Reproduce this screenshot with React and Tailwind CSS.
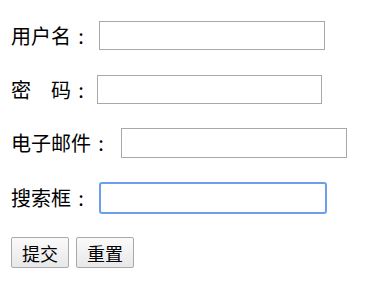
export default function App() {
  const font = { fontFamily: '"Noto Sans CJK SC", "Noto Sans", sans-serif' };
  return (
    <div className="bg-white w-[370px] h-[294px] pl-[11px] pt-[21px] text-[20px] text-black" style={font}>
      <div className="flex items-center h-[29px]">
        <label className="w-[80px] flex leading-none">
          <span>用户名</span>
          <span className="w-[20px] text-center">:</span>
        </label>
        <input type="text" className="ml-[8px] w-[226px] h-[29px] border border-[#a9a9a9] bg-white outline-none" />
      </div>

      <div className="flex items-center h-[29px] mt-[25px]">
        <label className="w-[80px] flex leading-none">
          <span>密</span>
          <span className="w-[20px]"></span>
          <span>码</span>
          <span className="w-[20px] text-center">:</span>
        </label>
        <input type="password" className="ml-[6px] w-[225px] h-[29px] border border-[#a9a9a9] bg-white outline-none" />
      </div>

      <div className="flex items-center h-[30px] mt-[24px]">
        <label className="w-[100px] flex leading-none">
          <span>电子邮件</span>
          <span className="w-[20px] text-center">:</span>
        </label>
        <input type="email" className="ml-[10px] w-[226px] h-[30px] border border-[#a9a9a9] bg-white outline-none" />
      </div>

      <div className="flex items-center h-[32px] mt-[24px]">
        <label className="w-[80px] flex leading-none">
          <span>搜索框</span>
          <span className="w-[20px] text-center">:</span>
        </label>
        <input type="search" className="ml-[8px] w-[228px] h-[32px] border-2 border-[#6d9eeb] rounded-[3px] bg-white outline-none" />
      </div>

      <div className="flex gap-[7px] mt-[23px]">
        <button className="w-[58px] h-[31px] border border-[#a9a9a9] rounded-[2px] bg-gradient-to-b from-[#fafafa] to-[#e8e8e8] text-[18px] leading-none">
          提交
        </button>
        <button className="w-[58px] h-[31px] border border-[#a9a9a9] rounded-[2px] bg-gradient-to-b from-[#fafafa] to-[#e8e8e8] text-[18px] leading-none">
          重置
        </button>
      </div>
    </div>
  );
}
